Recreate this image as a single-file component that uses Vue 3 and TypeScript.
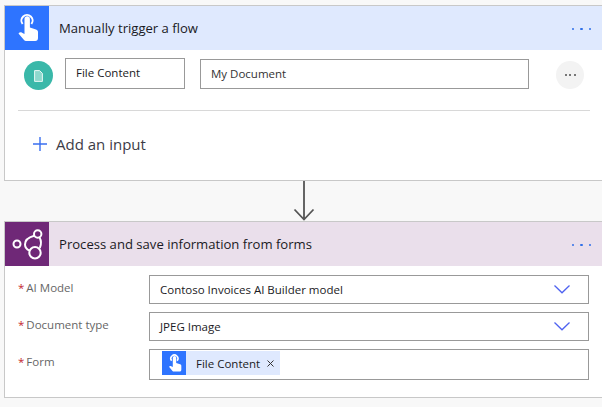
<script setup lang="ts">
const fields = [
  { label: 'AI Model', value: 'Contoso Invoices AI Builder model' },
  { label: 'Document type', value: 'JPEG Image' },
]
</script>

<template>
  <main class="page">
    <section class="card first">
      <header class="head blue">
        <div class="tile blue-tile">
          <svg width="44" height="44" viewBox="0 0 44 44" fill="none">
            <path d="M17.600 18a5.600 5.600 0 1 1 8.800 0" stroke="#fff" stroke-width="2" />
            <path d="M19.500 13a2.700 2.700 0 0 1 5.400 0v8.500l6.100 2c1.300.4 2 1.300 2 2.600V32c0 1.700-1 3-2.800 3H21c-.8 0-1.500-.4-2-1l-5.500-6.500c.8-1.200 2.300-1.500 3.500-.8l2.500 1.300z" fill="#fff" />
          </svg>
        </div>
        <h2 class="title">Manually trigger a flow</h2>
        <div class="dots"><i></i><i></i><i></i></div>
      </header>
      <div class="input-row">
        <div class="circle">
          <svg width="9" height="12" viewBox="0 0 9 12" fill="none">
            <path d="M.6.600h5l2.800 2.800v8H.6z" fill="#8ed8cd" stroke="#e8f8f5" stroke-width="1" />
          </svg>
        </div>
        <div class="box name">File Content</div>
        <div class="box desc">My Document</div>
        <div class="more"><i></i><i></i><i></i></div>
      </div>
      <div class="divider"></div>
      <div class="add">
        <svg width="14" height="14" viewBox="0 0 14 14"><path d="M7 0v14M0 7h14" stroke="#3a6ff0" stroke-width="1.400" /></svg>
        <span>Add an input</span>
      </div>
    </section>

    <div class="arrow">
      <svg width="22" height="40" viewBox="0 0 22 40" fill="none">
        <path d="M11 0v38.500M1.500 28.500 11 38.500l9.500-10" stroke="#555" stroke-width="1.800" />
      </svg>
    </div>

    <section class="card second">
      <header class="head purple">
        <div class="tile purple-tile">
          <svg width="44" height="44" viewBox="0 0 44 44" fill="none" stroke="#fff" stroke-width="2">
            <circle cx="12" cy="22" r="3.500" />
            <circle cx="32.700" cy="12" r="3.700" />
            <circle cx="30" cy="30.700" r="5.700" />
            <path d="M29.200 13.800C23 15.500 20 19 20 22.500c0 2.500 1.300 4.500 4.500 6.200M34.500 15.500c1.500 2.500 2 6.500.3 10.500" />
          </svg>
        </div>
        <h2 class="title">Process and save information from forms</h2>
        <div class="dots"><i></i><i></i><i></i></div>
      </header>
      <div class="fields">
        <div v-for="f in fields" :key="f.label" class="field">
          <label class="label"><b>*</b>{{ f.label }}</label>
          <div class="box select">
            <span>{{ f.value }}</span>
            <svg width="16" height="9" viewBox="0 0 16 9" fill="none"><path d="M.5.500 8 7.800 15.500.500" stroke="#4f63f0" stroke-width="1.300" /></svg>
          </div>
        </div>
        <div class="field">
          <label class="label"><b>*</b>Form</label>
          <div class="box token-box">
            <div class="chip">
              <div class="chip-icon">
                <svg width="24" height="24" viewBox="2.400 2.500 38 38" fill="none">
                  <path d="M17.600 18a5.600 5.600 0 1 1 8.800 0" stroke="#fff" stroke-width="2.400" />
                  <path d="M19.500 13a2.700 2.700 0 0 1 5.400 0v8.500l6.100 2c1.300.4 2 1.300 2 2.600V32c0 1.700-1 3-2.800 3H21c-.8 0-1.500-.4-2-1l-5.500-6.500c.8-1.200 2.300-1.500 3.500-.8l2.500 1.300z" fill="#fff" />
                </svg>
              </div>
              <span class="chip-text">File Content</span>
              <svg class="x" width="7" height="7" viewBox="0 0 7 7"><path d="M.5.500l6 6M6.500.500l-6 6" stroke="#333" stroke-width="1" /></svg>
            </div>
          </div>
        </div>
      </div>
    </section>
  </main>
</template>

<style scoped>
.page {
  width: 602px;
  height: 407px;
  box-sizing: border-box;
  padding: 5px 0 0 4px;
  background: #f8f8f8;
  overflow: hidden;
  font-family: "Open Sans", "Noto Sans", sans-serif;
  color: #1a1a24;
}
.card {
  background: #fff;
  border: 1px solid #c8c8c8;
  border-right: 0;
}
.first { height: 174px; }
.second { height: 175px; }
.head {
  display: flex;
  align-items: center;
  height: 44px;
}
.blue { background: #dfe9fe; }
.purple { background: #eadfeb; }
.tile {
  width: 44px;
  height: 44px;
  flex: none;
}
.tile svg { display: block; }
.blue-tile { background: #2e74ff; }
.purple-tile { background: #6f2877; }
.title {
  margin: 0 0 0 10px;
  flex: 1;
  font-size: 13.100px;
  font-weight: 400;
}
.dots {
  display: flex;
  gap: 5.800px;
  margin: 2px 11px 0 0;
}
.dots i {
  width: 2.500px;
  height: 2.500px;
  border-radius: 50%;
  background: #2f6fe8;
}
.input-row {
  display: flex;
  align-items: flex-start;
  height: 50px;
  padding: 8px 0 0 19px;
  box-sizing: border-box;
}
.circle {
  width: 29px;
  height: 29px;
  border-radius: 50%;
  background: #3ab8a9;
  display: flex;
  align-items: center;
  justify-content: center;
  margin: 3px 12px 0 0;
  flex: none;
}
.box {
  box-sizing: border-box;
  border: 1px solid #999;
  background: #fff;
  font-size: 11.500px;
  display: flex;
  align-items: center;
}
.name {
  width: 120px;
  height: 31px;
  padding: 0 0 2px 10px;
  margin-right: 15px;
}
.desc {
  width: 329px;
  height: 30px;
  padding: 0 0 2px 10px;
  margin: 1px 27px 0 0;
  color: #333;
}
.more {
  width: 28px;
  height: 28px;
  margin-top: 3px;
  border-radius: 50%;
  background: #f3f3f3;
  display: flex;
  align-items: center;
  justify-content: center;
  gap: 2.500px;
}
.more i {
  width: 2px;
  height: 2px;
  background: #777;
}
.divider {
  height: 1px;
  background: #d8d8d8;
  margin: 10px 12px 0 13px;
}
.add {
  display: flex;
  align-items: center;
  gap: 9px;
  padding: 23px 0 0 28px;
  font-size: 15px;
  color: #3c3c46;
}
.add svg { flex: none; }
.arrow {
  height: 40px;
  display: flex;
  justify-content: center;
}
.arrow svg { margin-left: 2px; }
.fields {
  display: flex;
  flex-direction: column;
  gap: 8px;
  padding-top: 9px;
}
.field {
  display: flex;
  align-items: flex-start;
  padding-left: 13px;
}
.label {
  width: 131px;
  flex: none;
  font-size: 11.500px;
  color: #666;
  line-height: 16px;
  padding-top: 5px;
}
.label b {
  color: #c4262e;
  font-weight: 400;
  margin-right: 2px;
}
.select {
  width: 440px;
  height: 29px;
  padding: 0 18px 0 10px;
  justify-content: space-between;
}
.token-box {
  width: 440px;
  height: 31px;
  padding: 1px 0 0 12px;
  align-items: flex-start;
}
.chip {
  display: flex;
  align-items: center;
  height: 24px;
  width: 118px;
  background: #dfe9fe;
}
.chip-icon {
  width: 24px;
  height: 24px;
  background: #2e74ff;
  flex: none;
}
.chip-icon svg { display: block; }
.chip-text {
  margin-left: 10px;
  font-size: 11.500px;
}
.x { margin-left: 7px; }
</style>
